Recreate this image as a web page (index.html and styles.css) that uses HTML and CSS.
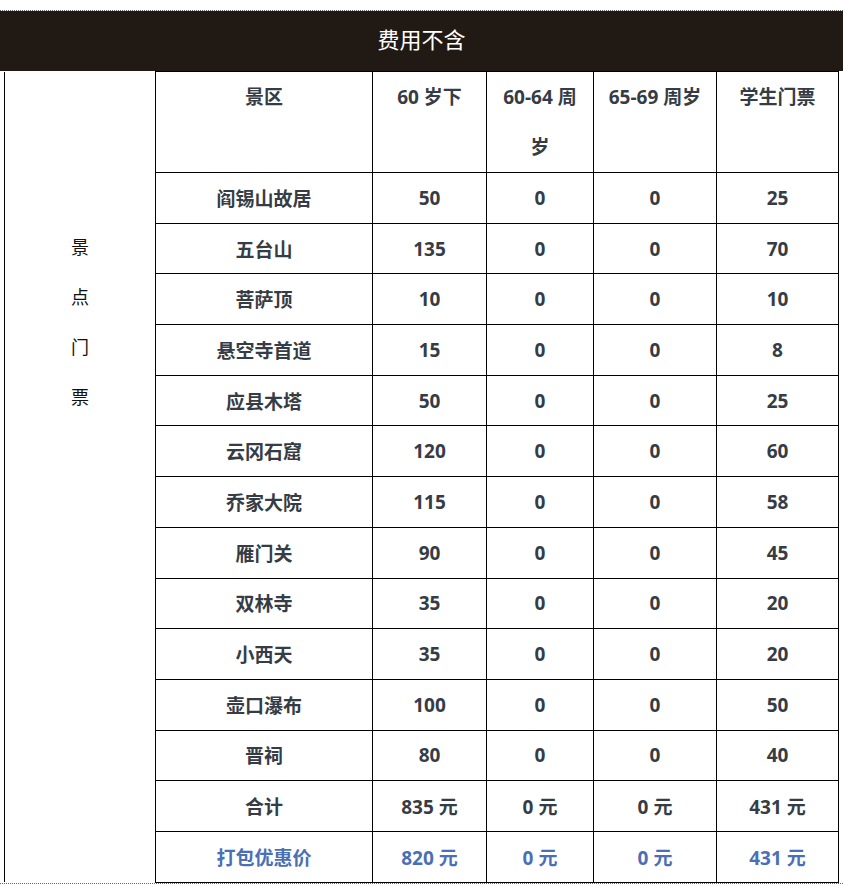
FILE: index.html
```html
<!DOCTYPE html>
<html lang="zh">
<head>
<meta charset="utf-8">
<title>费用不含</title>
<link rel="stylesheet" href="styles.css">
</head>
<body>
<section class="sheet">
  <div class="title">费用不含</div>
  <table class="fees">
    <colgroup>
      <col class="c1"><col class="c2"><col class="c3"><col class="c4"><col class="c5"><col class="c6">
    </colgroup>
    <tr class="head">
      <td class="side" rowspan="15"><div class="side-text">景<br>点<br>门<br>票</div></td>
      <th>景区</th><th>60 岁下</th><th>60-64 周岁</th><th>65-69 周岁</th><th>学生门票</th>
    </tr>
    <tr><td>阎锡山故居</td><td>50</td><td>0</td><td>0</td><td>25</td></tr>
    <tr><td>五台山</td><td>135</td><td>0</td><td>0</td><td>70</td></tr>
    <tr><td>菩萨顶</td><td>10</td><td>0</td><td>0</td><td>10</td></tr>
    <tr><td>悬空寺首道</td><td>15</td><td>0</td><td>0</td><td>8</td></tr>
    <tr><td>应县木塔</td><td>50</td><td>0</td><td>0</td><td>25</td></tr>
    <tr><td>云冈石窟</td><td>120</td><td>0</td><td>0</td><td>60</td></tr>
    <tr><td>乔家大院</td><td>115</td><td>0</td><td>0</td><td>58</td></tr>
    <tr><td>雁门关</td><td>90</td><td>0</td><td>0</td><td>45</td></tr>
    <tr><td>双林寺</td><td>35</td><td>0</td><td>0</td><td>20</td></tr>
    <tr><td>小西天</td><td>35</td><td>0</td><td>0</td><td>20</td></tr>
    <tr><td>壶口瀑布</td><td>100</td><td>0</td><td>0</td><td>50</td></tr>
    <tr><td>晋祠</td><td>80</td><td>0</td><td>0</td><td>40</td></tr>
    <tr><td>合计</td><td>835 元</td><td>0 元</td><td>0 元</td><td>431 元</td></tr>
    <tr class="deal"><td>打包优惠价</td><td>820 元</td><td>0 元</td><td>0 元</td><td>431 元</td></tr>
  </table>
</section>
</body>
</html>
```

FILE: styles.css
```css
html, body {
  margin: 0;
  padding: 0;
  background: #ffffff;
}

body {
  font-family: "Open Sans", "Noto Sans CJK SC", sans-serif;
}

.sheet {
  width: 843px;
  margin-top: 10px;
  border-top: 1px dotted #666;
  border-bottom: 1px dotted #666;
}

.title {
  height: 60px;
  background: #211a14;
  color: #ffffff;
  font-family: "Noto Sans CJK SC", sans-serif;
  font-size: 22px;
  line-height: 54px;
  text-align: center;
}

.fees {
  margin-left: 4px;
  width: 835px;
  border-collapse: collapse;
  table-layout: fixed;
}

.c1 { width: 151px; }
.c2 { width: 217px; }
.c3 { width: 114px; }
.c4 { width: 107px; }
.c5 { width: 123px; }
.c6 { width: 122px; }

.fees th,
.fees td {
  border: 1.5px solid #000;
  padding: 0 8px;
  text-align: center;
  font-size: 19px;
  font-weight: 700;
  color: #363c45;
}

.fees tr {
  height: 50.7px;
}

.fees tr.head {
  height: 100px;
}

.fees tr.head th {
  vertical-align: top;
  line-height: 50px;
}

.fees tr.deal td {
  color: #4a6fb5;
}

.fees td.side {
  border-top: none;
  border-bottom: none;
  vertical-align: top;
  padding: 0;
  font-family: "Noto Sans CJK SC", sans-serif;
  font-weight: 400;
  font-size: 18px;
  color: #111;
}

.side-text {
  padding-top: 149px;
  line-height: 50px;
}
```
